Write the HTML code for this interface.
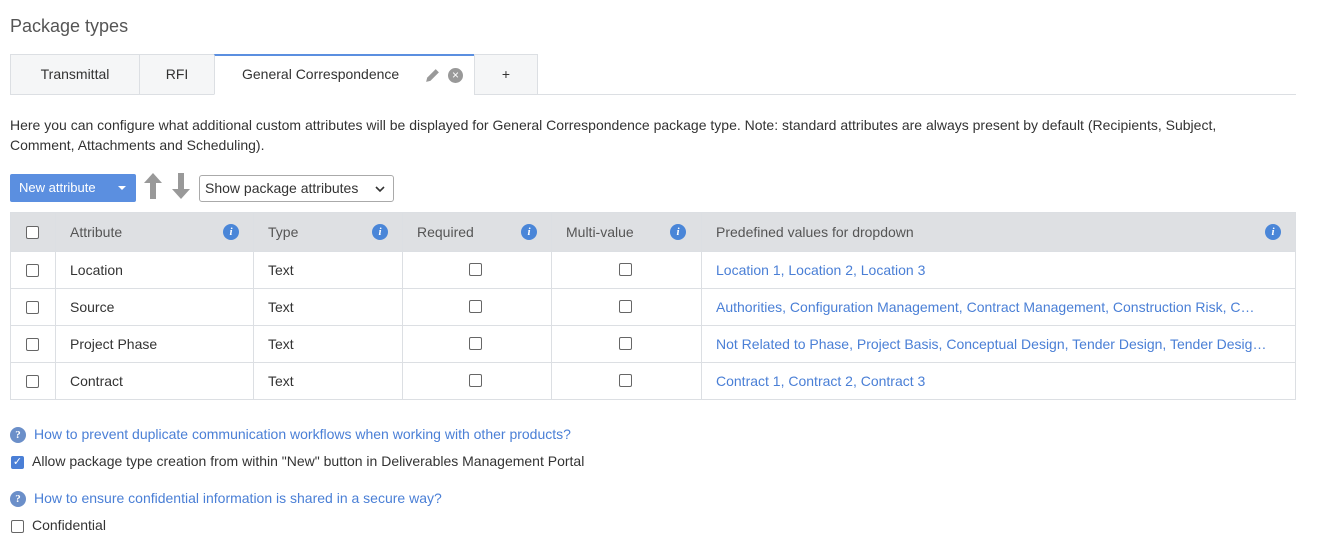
<!DOCTYPE html>
<html><head><meta charset="utf-8"><style>
*{box-sizing:border-box;margin:0;padding:0}
body{width:1321px;height:549px;background:#fff;font-family:"Liberation Sans",sans-serif;font-size:14px;color:#333;position:relative;overflow:hidden}
.a{position:absolute;white-space:nowrap}
.tab{position:absolute;top:54px;height:41px;border:1px solid #dcdfe3;background:#f5f6f7;text-align:center;line-height:39px;color:#333}
.cb{position:absolute;width:13px;height:13px;border:1px solid #666;border-radius:2px;background:#fff}
.info{position:absolute;width:16px;height:16px;border-radius:50%;background:#4a86d8;color:#fff;font:italic bold 11px "Liberation Serif",serif;text-align:center;line-height:16px}
.link{color:#4a7fd6}
table{position:absolute;left:10px;top:212px;border-collapse:collapse;width:1286px}
td,th{border:1px solid #dcdfe3;height:37px;font-weight:normal;text-align:left;padding-left:14px;position:relative}
th{background:#dee0e3;height:39px;color:#555}
</style></head><body>
<div class="a" style="left:10px;top:16px;font-size:18px;color:#555">Package types</div>
<div class="a" style="left:10px;top:94px;width:1286px;height:1px;background:#dcdfe3"></div>
<div class="tab" style="left:10px;width:130px">Transmittal</div>
<div class="tab" style="left:139px;width:76px">RFI</div>
<div class="tab" style="left:214px;width:261px;background:#fff;border-top:2px solid #5b8fe0;border-bottom-color:#fff;text-align:left;padding-left:27px;line-height:37px">General Correspondence
<svg style="position:absolute;left:209px;top:11px" width="17" height="17" viewBox="0 0 16 16"><path d="M2 14l1-4 8-8 3 3-8 8z" fill="#999"/></svg>
<span style="position:absolute;left:233px;top:12px;width:15px;height:15px;border-radius:50%;background:#999;color:#fff;font-size:12px;line-height:15px;text-align:center">×</span></div>
<div class="tab" style="left:474px;width:64px">+</div>
<div class="a" style="left:10px;top:115px;line-height:20px;white-space:normal;width:1272px">Here you can configure what additional custom attributes will be displayed for General Correspondence package type. Note: standard attributes are always present by default (Recipients, Subject, Comment, Attachments and Scheduling).</div>
<div class="a" style="left:10px;top:174px;width:126px;height:28px;background:#5b8fe0;border-radius:2px;color:#fff;font-size:13px;line-height:28px;padding-left:9px">New attribute<span style="position:absolute;left:108px;top:12px;border:4px solid transparent;border-top:4px solid #fff"></span></div>
<svg class="a" style="left:143px;top:172px" width="20" height="28" viewBox="0 0 20 28"><path d="M10 1L1 11h6v16h6V11h6z" fill="#999"/></svg>
<svg class="a" style="left:171px;top:172px" width="20" height="28" viewBox="0 0 20 28"><path d="M10 27L1 17h6V1h6v16h6z" fill="#999"/></svg>
<div class="a" style="left:199px;top:175px;width:195px;height:27px;border:1px solid #aaa;border-radius:3px;line-height:25px;padding-left:5px">Show package attributes<svg style="position:absolute;left:175px;top:9px" width="10" height="8"><path d="M1 2l4 4 4-4" stroke="#333" stroke-width="1.6" fill="none"/></svg></div>
<table>
<tr><th style="width:45px"><span class="cb" style="left:15px;top:13px"></span></th><th style="width:198px">Attribute<span class="info" style="left:167px;top:11px">i</span></th><th style="width:149px">Type<span class="info" style="left:118px;top:11px">i</span></th><th style="width:149px">Required<span class="info" style="left:118px;top:11px">i</span></th><th style="width:150px">Multi-value<span class="info" style="left:118px;top:11px">i</span></th><th>Predefined values for dropdown<span class="info" style="left:563px;top:11px">i</span></th></tr>
<tr><td><span class="cb" style="left:15px;top:12px"></span></td><td>Location</td><td>Text</td><td><span class="cb" style="left:66px;top:11px"></span></td><td><span class="cb" style="left:67px;top:11px"></span></td><td class="link">Location 1, Location 2, Location 3</td></tr>
<tr><td><span class="cb" style="left:15px;top:12px"></span></td><td>Source</td><td>Text</td><td><span class="cb" style="left:66px;top:11px"></span></td><td><span class="cb" style="left:67px;top:11px"></span></td><td class="link">Authorities, Configuration Management, Contract Management, Construction Risk, C…</td></tr>
<tr><td><span class="cb" style="left:15px;top:12px"></span></td><td>Project Phase</td><td>Text</td><td><span class="cb" style="left:66px;top:11px"></span></td><td><span class="cb" style="left:67px;top:11px"></span></td><td class="link">Not Related to Phase, Project Basis, Conceptual Design, Tender Design, Tender Desig…</td></tr>
<tr><td><span class="cb" style="left:15px;top:12px"></span></td><td>Contract</td><td>Text</td><td><span class="cb" style="left:66px;top:11px"></span></td><td><span class="cb" style="left:67px;top:11px"></span></td><td class="link">Contract 1, Contract 2, Contract 3</td></tr>
</table>
<span class="info" style="left:10px;top:427px;font-style:normal;background:#6b8fc9">?</span>
<div class="a link" style="left:34px;top:426px">How to prevent duplicate communication workflows when working with other products?</div>
<span class="cb" style="left:11px;top:456px;background:#4a7fd6;border-color:#4a7fd6;color:#fff;font-size:11px;line-height:11px;text-align:center">✓</span>
<div class="a" style="left:32px;top:453px">Allow package type creation from within "New" button in Deliverables Management Portal</div>
<span class="info" style="left:10px;top:491px;font-style:normal;background:#6b8fc9">?</span>
<div class="a link" style="left:34px;top:490px">How to ensure confidential information is shared in a secure way?</div>
<span class="cb" style="left:11px;top:520px"></span>
<div class="a" style="left:32px;top:517px">Confidential</div>
</body></html>
